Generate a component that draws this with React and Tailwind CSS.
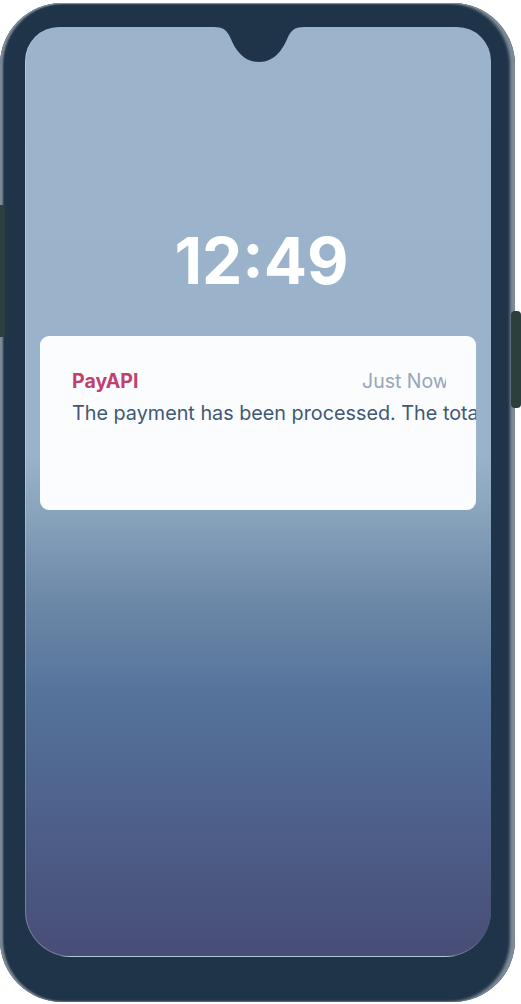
import React from 'react';

const Notch = () => (
  <svg
    className="absolute left-1/2 top-0 -translate-x-1/2"
    width="90"
    height="36"
    viewBox="0 0 90 36"
  >
    <path
      d="M0 0 C10 0 13 4 16 10 C21 22 29 35 45 35 C61 35 69 22 74 10 C77 4 80 0 90 0 Z"
      fill="#203449"
    />
  </svg>
);

const Notification = () => (
  <div className="w-[436px] h-[174px] self-start ml-[14px] rounded-[9px] bg-[#fafcfe] overflow-hidden pl-[32px] pt-[31px]">
    <div className="flex w-[374px] overflow-hidden leading-7">
      <span className="text-[19.5px] font-bold text-[#c0416e]">PayAPI</span>
      <span className="ml-auto w-[84px] shrink-0 overflow-hidden whitespace-nowrap text-[19.5px] text-[#97a6b8]">
        Just Now
      </span>
    </div>
    <p className="mt-[4px] whitespace-nowrap text-[19.8px] leading-7 text-[#415873]">
      The payment has been processed. The total amount has been charged to your card.
    </p>
  </div>
);

export default function App() {
  return (
    <div className="min-h-screen bg-white font-['Inter',sans-serif]">
      <div className="relative mt-[3px] h-[999px] w-[515px] rounded-[62px] bg-[#203449] pl-[25px] pr-[24px] pt-[24px] pb-[45px] shadow-[inset_3px_0_2px_#7f8c98,inset_-5px_0_3px_#7f8c98,inset_0_1px_1px_#8793a0]">
        {/* side buttons */}
        <div className="absolute left-0 top-[202px] h-[132px] w-[5px] rounded-r-[3px] bg-[#2c3f3c]" />
        <div className="absolute right-[-6px] top-[308px] h-[97px] w-[10px] rounded-[4px] bg-[#2c3f3c]" />

        <div className="relative flex h-full flex-col items-center overflow-hidden rounded-t-[34px] rounded-b-[46px] border-b border-l border-white/25 bg-[linear-gradient(to_bottom,#9bb4cb_0%,#9ab3ca_46%,#8aa4bd_52%,#6c88a7_62%,#55739b_72%,#4e628c_84%,#484d77_100%)]">
          <Notch />
          <div className="mt-[202px] ml-[6px] text-[64px] font-bold leading-none text-white">12:49</div>
          <div className="mt-[43px] self-stretch flex">
            <Notification />
          </div>
        </div>
      </div>
    </div>
  );
}
